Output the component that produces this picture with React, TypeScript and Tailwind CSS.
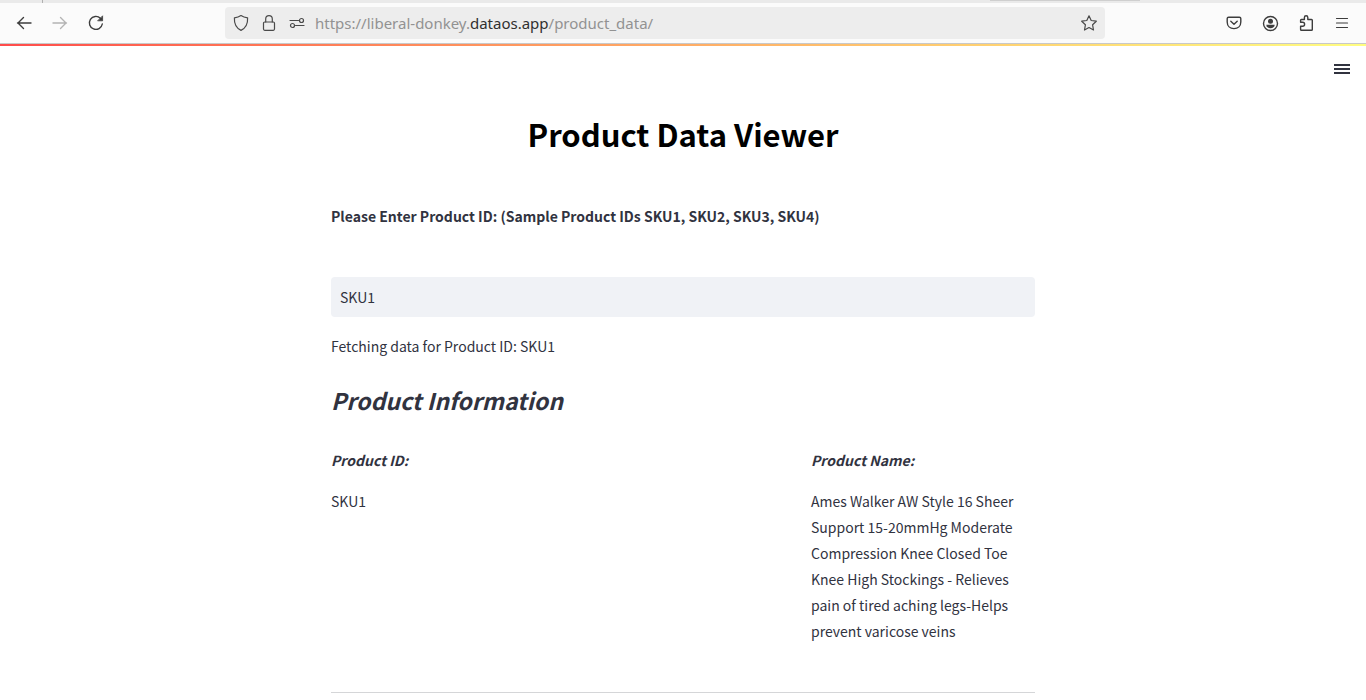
import { useState } from "react";
import type { ReactNode } from "react";

function IconButton({ label, disabled, children }: { label: string; disabled?: boolean; children: ReactNode }) {
  return (
    <button
      type="button"
      aria-label={label}
      disabled={disabled}
      className="flex size-9 shrink-0 items-center justify-center rounded text-[#3d3d3d] disabled:text-[#b4b4b4]"
    >
      <svg viewBox="0 0 16 16" className="size-4 overflow-visible" fill="none" stroke="currentColor" strokeWidth="1.4" strokeLinecap="round" strokeLinejoin="round">
        {children}
      </svg>
    </button>
  );
}

function SiteButton({ label, children }: { label: string; children: ReactNode }) {
  return (
    <button type="button" aria-label={label} className="flex h-8 w-7 shrink-0 items-center justify-center text-[#4a4a4a]">
      <svg viewBox="0 0 16 16" className="size-4 overflow-visible" fill="none" stroke="currentColor" strokeWidth="1.2" strokeLinecap="round" strokeLinejoin="round">
        {children}
      </svg>
    </button>
  );
}

function BrowserBar() {
  return (
    <header>
      <div className="flex h-[3px] bg-[#eaeaea]">
        <div className="w-[43px] border-r border-[#b0b0b0]" />
        <div className="ml-auto mr-[226px] h-px w-[150px] bg-[#cfcfcf]" />
      </div>
      <nav aria-label="Browser" className="flex h-[41px] items-center border-b border-[#c8c8c8] bg-[#fbfbfb] px-[6px]">
        <IconButton label="Back">
          <path d="M15 8H1.5M7.5 2.500 2 8l5.500 5.500" />
        </IconButton>
        <IconButton label="Forward" disabled>
          <path d="M1 8h13.5M8.5 2.500 14 8l-5.500 5.500" />
        </IconButton>
        <IconButton label="Reload">
          <path d="M14.3 9A6.5 6.5 0 1 1 12.4 3.2" />
          <path d="M14.6 1.2v4.6H10z" fill="currentColor" strokeWidth="0.8" />
        </IconButton>
        <div className="ml-[111px] flex h-8 w-[880px] shrink items-center rounded bg-[#ededed] px-[2px]">
          <SiteButton label="Tracking protection">
            <path d="M8 .6c1.9 1.3 4.1 2 6.6 2.3.3 5.3-1.7 10.1-6.6 12.5C3.1 13 1.1 8.2 1.4 2.9 3.9 2.6 6.1 1.9 8 .6z" />
          </SiteButton>
          <SiteButton label="Connection secure">
            <rect x="2.5" y="7" width="11" height="8.3" rx="1.2" />
            <path d="M4.7 7V3.9a3.3 3.3 0 0 1 6.6 0V7" />
          </SiteButton>
          <SiteButton label="Permissions">
            <path d="M1 5.5h8.5M6.5 10.5H15" />
            <circle cx="12.5" cy="5.5" r="2" />
            <circle cx="3.5" cy="10.5" r="2" />
          </SiteButton>
          <a
            href="https://liberal-donkey.dataos.app/product_data/"
            className="ml-1 min-w-0 flex-1 truncate font-['Noto_Sans',sans-serif] text-[15px] leading-6 text-[#929292]"
          >
            https://liberal-donkey.<span className="text-[#303030]">dataos.app</span>/product_data/
          </a>
          <SiteButton label="Bookmark this page">
            <path d="m8 .8 2.2 4.7 5.1.7-3.7 3.6.9 5.2L8 12.5 3.5 15l.9-5.2L.7 6.2l5.1-.7z" />
          </SiteButton>
        </div>
        <div className="ml-auto flex">
          <IconButton label="Save to Pocket">
            <path d="M2.6 2.2h10.8c.8 0 1.4.6 1.4 1.4V7c0 4-2.8 6.6-6.8 6.6S1.2 11 1.2 7V3.6c0-.8.6-1.4 1.4-1.4z" />
            <path d="M4.8 6.3 8 9.3l3.2-3" />
          </IconButton>
          <IconButton label="Account">
            <circle cx="8.5" cy="8.5" r="7" />
            <circle cx="8.5" cy="6.3" r="2.5" fill="currentColor" stroke="none" />
            <path d="M4.3 9.8h8.4c0 2-1.9 3.4-4.2 3.4s-4.2-1.4-4.2-3.4z" fill="currentColor" stroke="none" />
          </IconButton>
          <IconButton label="Extensions">
            <path d="M2.600 7.300V5.300c0-.5.3-.8.8-.8h3V2.500a1.700 1.700 0 0 1 3.400 0v2h3.700c.5 0 .8.3.8.8v9.200c0 .5-.3.800-.8.800H3.400c-.5 0-.8-.3-.8-.8v-3.200h2a1.900 1.900 0 0 0 0-4z" />
          </IconButton>
          <IconButton label="Application menu">
            <path d="M2.5 3.5h11M2.5 8h11M2.5 12.5h11" strokeWidth="1.2" />
          </IconButton>
        </div>
      </nav>
    </header>
  );
}

export default function App() {
  const [productId, setProductId] = useState("SKU1");
  return (
    <div className="min-h-screen bg-white font-['Noto_Sans_CJK_SC',sans-serif] text-sm leading-[26px] text-[#31333f]">
      <BrowserBar />
      <div className="h-[2px] bg-linear-to-r from-[#ff4b4b] to-[#fffd80]" />
      <div className="flex h-[46px] items-center justify-end px-4">
        <button type="button" aria-label="Main menu">
          <svg viewBox="0 0 16 16" className="size-4" fill="none" stroke="currentColor" strokeWidth="1.8">
            <path d="M0 4h16M0 8h16M0 12h16" />
          </svg>
        </button>
      </div>
      <main className="mx-auto max-w-[704px] pt-[19px]">
        <h1 className="text-center text-[31px] font-bold leading-[46px] text-black">Product Data Viewer</h1>
        <label htmlFor="product-id" className="mt-[46px] block font-bold">
          Please Enter Product ID: (Sample Product IDs SKU1, SKU2, SKU3, SKU4)
        </label>
        <input
          id="product-id"
          type="text"
          value={productId}
          onChange={(e) => setProductId(e.target.value)}
          className="mt-12 block h-10 w-full rounded bg-[#f0f2f6] px-[9px] outline-none"
        />
        <p className="mt-4">Fetching data for Product ID: {productId}</p>
        <h2 className="mt-6 text-[23px] font-bold italic leading-[34px]">Product Information</h2>
        <dl className="mt-[30px] grid grid-cols-3 gap-4">
          <div>
            <dt className="font-bold italic">Product ID:</dt>
            <dd className="mt-[15px]">SKU1</dd>
          </div>
          <div className="col-start-3">
            <dt className="font-bold italic">Product Name:</dt>
            <dd className="mt-[15px]">
              Ames Walker AW Style 16 Sheer Support 15-20mmHg Moderate Compression Knee Closed Toe Knee High Stockings - Relieves pain of tired aching legs-Helps prevent varicose veins
            </dd>
          </div>
        </dl>
        <hr className="mt-12 border-[#d5d6d8]" />
      </main>
    </div>
  );
}
